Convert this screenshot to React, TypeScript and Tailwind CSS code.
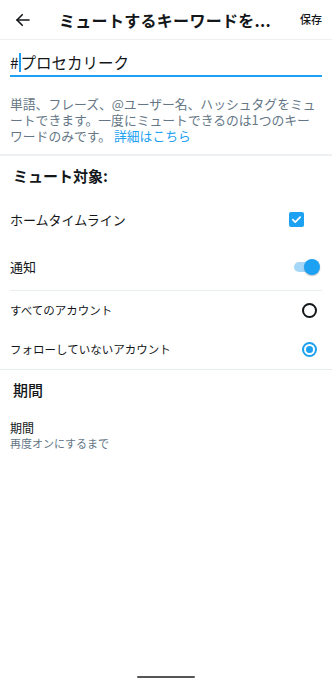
import React from "react";

const font = { fontFamily: '"Noto Sans CJK JP", "Noto Sans", sans-serif' };

export default function App() {
  return (
    <div className="w-[332px] h-[692px] bg-white text-[#14171a] flex flex-col" style={font}>
      {/* header */}
      <div className="h-[40px] flex items-center border-b border-[#eef1f3] shrink-0">
        <div className="w-[44px] flex justify-center pl-[1px]">
          <svg width="18" height="18" viewBox="0 0 24 24" fill="none" stroke="#14171a" strokeWidth="2.2" strokeLinecap="round" strokeLinejoin="round">
            <path d="M20 12H4" />
            <path d="M11 5l-7 7 7 7" />
          </svg>
        </div>
        <div className="ml-[15px] text-[16px] font-semibold leading-none tracking-[0.3px] whitespace-nowrap">ミュートするキーワードを...</div>
        <div className="ml-auto mr-[10px] text-[11px] font-medium">保存</div>
      </div>

      {/* input */}
      <div className="px-[10px] pt-[10px]">
        <div className="border-b-2 border-[#1da1f2] pb-[1px] flex items-center text-[15.5px] leading-[24px]">
          <span>#</span>
          <span className="inline-block w-[1.5px] h-[19px] bg-[#1da1f2] ml-[0.5px]" />
          <span>プロセカリーク</span>
        </div>
      </div>

      {/* description */}
      <div className="h-[79px] px-[10px] pt-[19px] text-[12.8px] leading-[16px] text-[#657786] border-b-2 border-[#eef1f3] shrink-0">
        <p>
          単語、フレーズ、@ユーザー名、ハッシュタグをミュートできます。一度にミュートできるのは1つのキーワードのみです。{" "}
          <span className="text-[#1da1f2]">詳細はこちら</span>
        </p>
      </div>

      {/* mute target */}
      <div className="px-[13px] h-[40px] flex items-center text-[15px] font-bold shrink-0">ミュート対象:</div>

      <div className="px-[10px] h-[47px] flex items-center justify-between shrink-0">
        <span className="text-[13px]">ホームタイムライン</span>
        <div className="mr-[18px] w-[15px] h-[15px] rounded-[2px] bg-[#1da1f2] flex items-center justify-center">
          <svg width="11" height="11" viewBox="0 0 12 12" fill="none" stroke="white" strokeWidth="1.8" strokeLinecap="round" strokeLinejoin="round">
            <path d="M2 6.2l2.6 2.6L10 3.4" />
          </svg>
        </div>
      </div>

      <div className="px-[10px] h-[47px] flex items-center justify-between shrink-0">
        <span className="text-[13px]">通知</span>
        <div className="relative w-[26px] h-[16px] mr-[2px]">
          <div className="absolute left-0 top-[3px] w-[22px] h-[10px] rounded-full bg-[#a5d8f8]" />
          <div className="absolute right-0 top-0 w-[16px] h-[16px] rounded-full bg-[#1da1f2] shadow-[0_1px_1.5px_rgba(0,0,0,0.25)]" />
        </div>
      </div>

      <div className="mx-[10px] border-b border-[#e8edf0]" />

      <div className="px-[10px] h-[39px] flex items-center justify-between shrink-0">
        <span className="text-[11.5px]">すべてのアカウント</span>
        <div className="mr-[5px] w-[15px] h-[15px] rounded-full border-2 border-[#14171a]" />
      </div>
      <div className="px-[10px] h-[39px] flex items-center justify-between shrink-0">
        <span className="text-[11.5px]">フォローしていないアカウント</span>
        <div className="mr-[5px] w-[15px] h-[15px] rounded-full border-2 border-[#1da1f2] flex items-center justify-center">
          <div className="w-[7px] h-[7px] rounded-full bg-[#1da1f2]" />
        </div>
      </div>

      <div className="border-b border-[#e8edf0]" />

      <div className="px-[13px] h-[40px] flex items-center text-[15px] font-medium shrink-0">期間</div>

      <div className="px-[10px] pt-[10px] flex flex-col">
        <span className="text-[12px] leading-[16px]">期間</span>
        <span className="text-[11px] leading-[15px] text-[#657786]">再度オンにするまで</span>
      </div>

      <div className="mt-auto h-[16px] flex justify-center">
        <div className="w-[58px] h-[2px] rounded-full bg-[#555]" />
      </div>
    </div>
  );
}
